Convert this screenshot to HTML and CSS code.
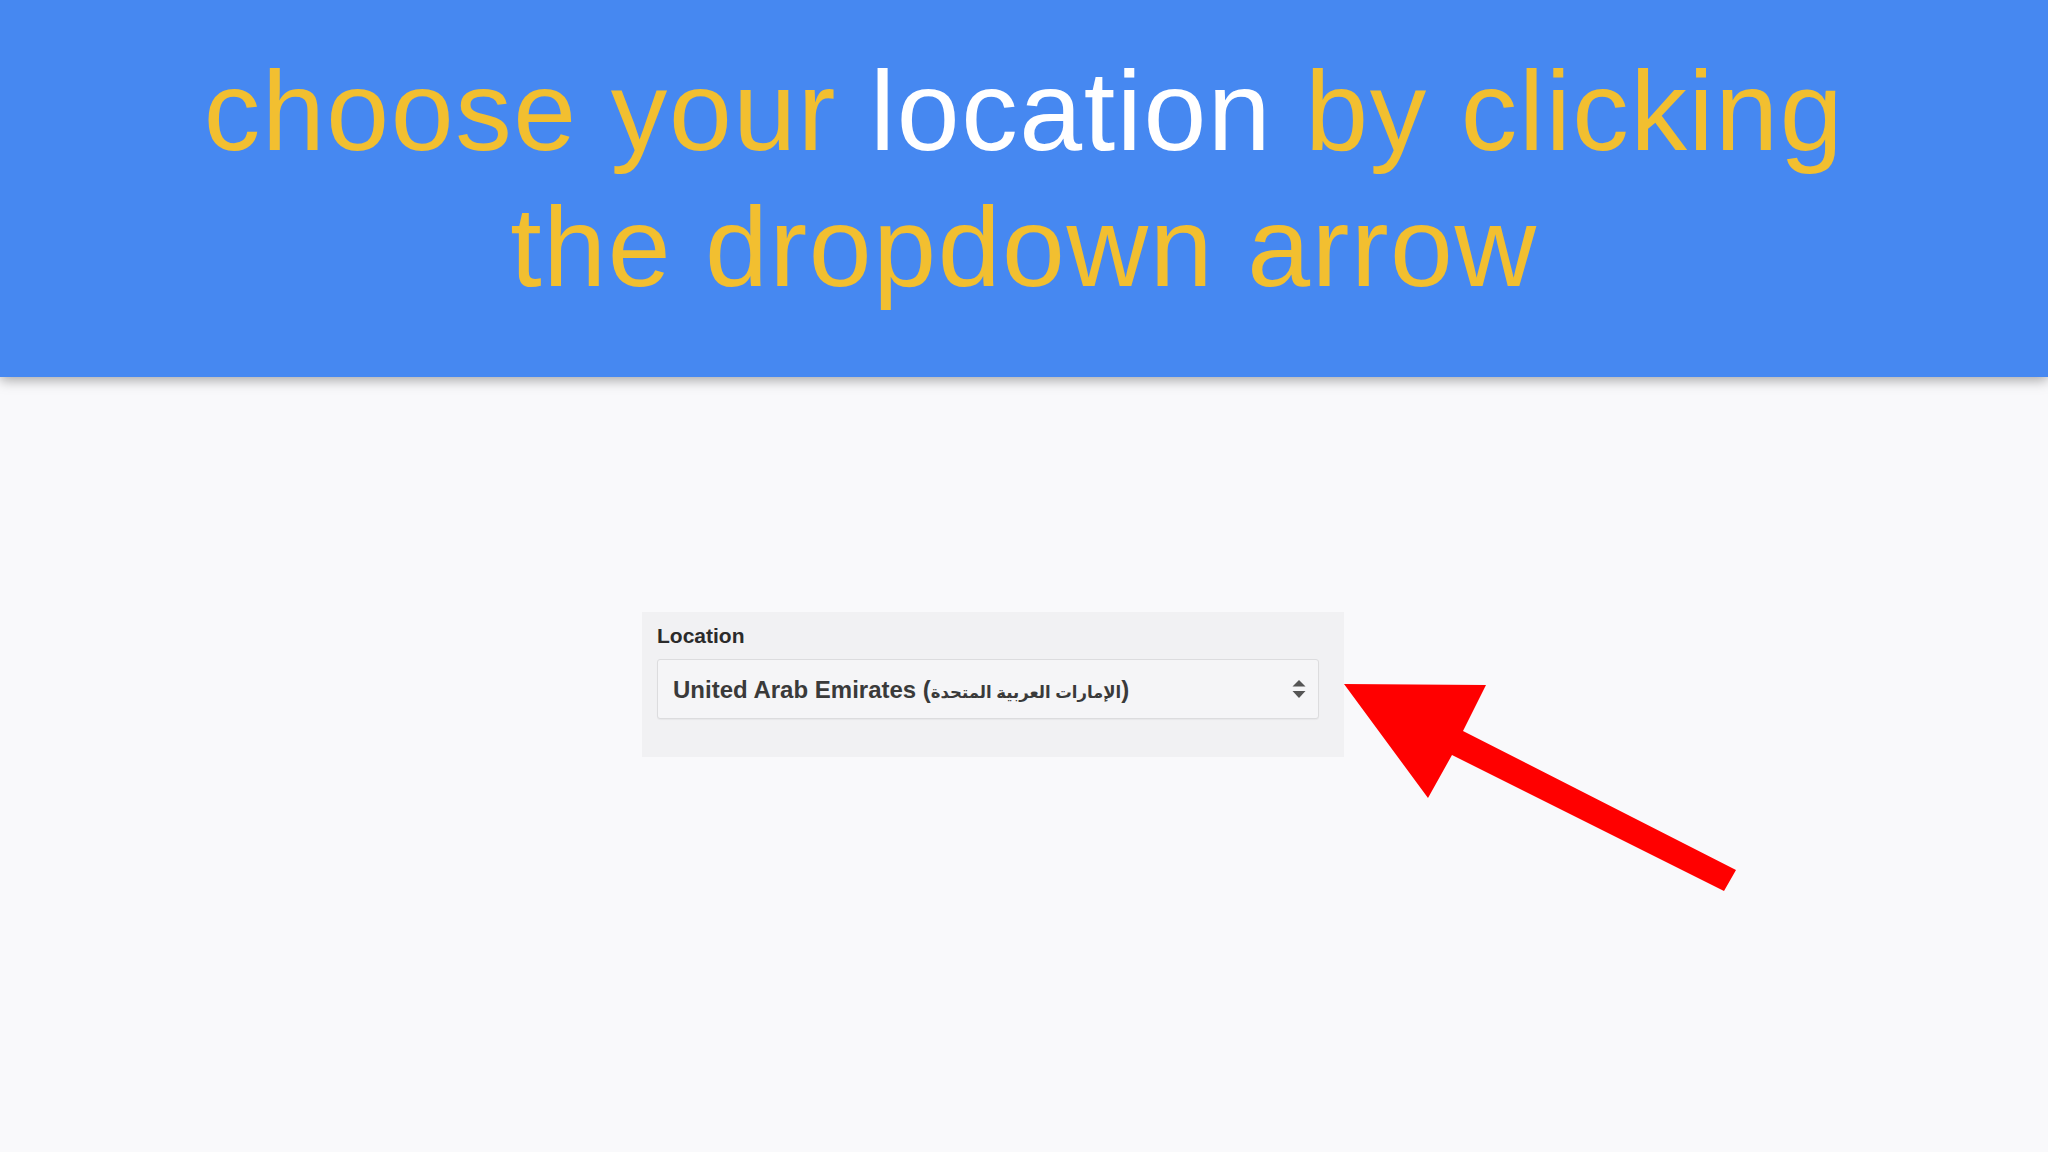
FILE: index.html
```html
<!DOCTYPE html>
<html lang="en">
<head>
  <meta charset="UTF-8">
  <meta name="viewport" content="width=device-width, initial-scale=1.0">
  <title>Choose your location</title>
  <link rel="stylesheet" href="styles.css">
</head>
<body>
  <header class="banner">
    <h1 class="banner-title">choose your <span class="highlight">location</span> by clicking<br>the dropdown arrow</h1>
  </header>

  <main class="stage">
    <div class="location-panel">
      <label class="field-label">Location</label>
      <div class="fake-select">
        <span class="fake-select-value">United Arab Emirates (<span class="native-name">الإمارات العربية المتحدة</span>)</span>
        <svg class="spinner" width="16" height="22" viewBox="0 0 16 22">
          <polygon points="8,2 14.5,8.5 1.5,8.5" fill="#555"/>
          <polygon points="1.5,13 14.5,13 8,20" fill="#555"/>
        </svg>
      </div>
    </div>
  </main>

  <!-- pointer drawn on top of the page -->
  <svg class="pointer" width="2048" height="1152" viewBox="0 0 2048 1152">
    <polygon points="1344,684 1486,685 1463,731 1736,870 1724,891 1452,755 1428,798" fill="#ff0000"/>
  </svg>
</body>
</html>
```

FILE: styles.css
```css
/* Reset and Basic Styling */
* {
  margin: 0;
  padding: 0;
  box-sizing: border-box;
}
body {
  position: relative;
  min-height: 100vh;
  background: #f9f9fb;
  font-family: 'Liberation Sans', 'DejaVu Sans', Arial, sans-serif;
  overflow: hidden;
}

/* Banner */
.banner {
  position: relative;
  z-index: 1;
  height: 377px;
  padding-top: 43px;
  background: #4688f1;
  box-shadow: 0 3px 12px rgba(0, 0, 0, 0.35);
  text-align: center;
}
.banner-title {
  font-size: 113px;
  font-weight: normal;
  line-height: 136px;
  letter-spacing: 1.6px;
  color: #f2bf30;
}
.highlight {
  color: #fff;
}

/* Form area */
.stage {
  display: flex;
  padding: 235px 0 0 642px;
}
.location-panel {
  width: 702px;
  height: 145px;
  padding: 12px 25px 0 15px;
  background: #f1f1f3;
}
.field-label {
  display: block;
  font-size: 21px;
  font-weight: bold;
  line-height: 24px;
  color: #2b2b2b;
  margin-bottom: 11px;
}

/* Select look-alike */
.fake-select {
  display: flex;
  align-items: center;
  justify-content: space-between;
  height: 60px;
  padding: 4px 11px 0 15px;
  background: #f5f5f7;
  border: 1px solid #dcdcde;
  border-radius: 3px;
  box-shadow: 0 1px 1px rgba(0, 0, 0, 0.04);
}
.fake-select-value {
  font-size: 24px;
  font-weight: bold;
  line-height: 54px;
  color: #3a3a3a;
}
.native-name {
  font-size: 16.5px;
}
.spinner {
  margin-top: -4px;
}

/* Pointer overlay */
.pointer {
  position: absolute;
  top: 0;
  left: 0;
  z-index: 2;
}
```
